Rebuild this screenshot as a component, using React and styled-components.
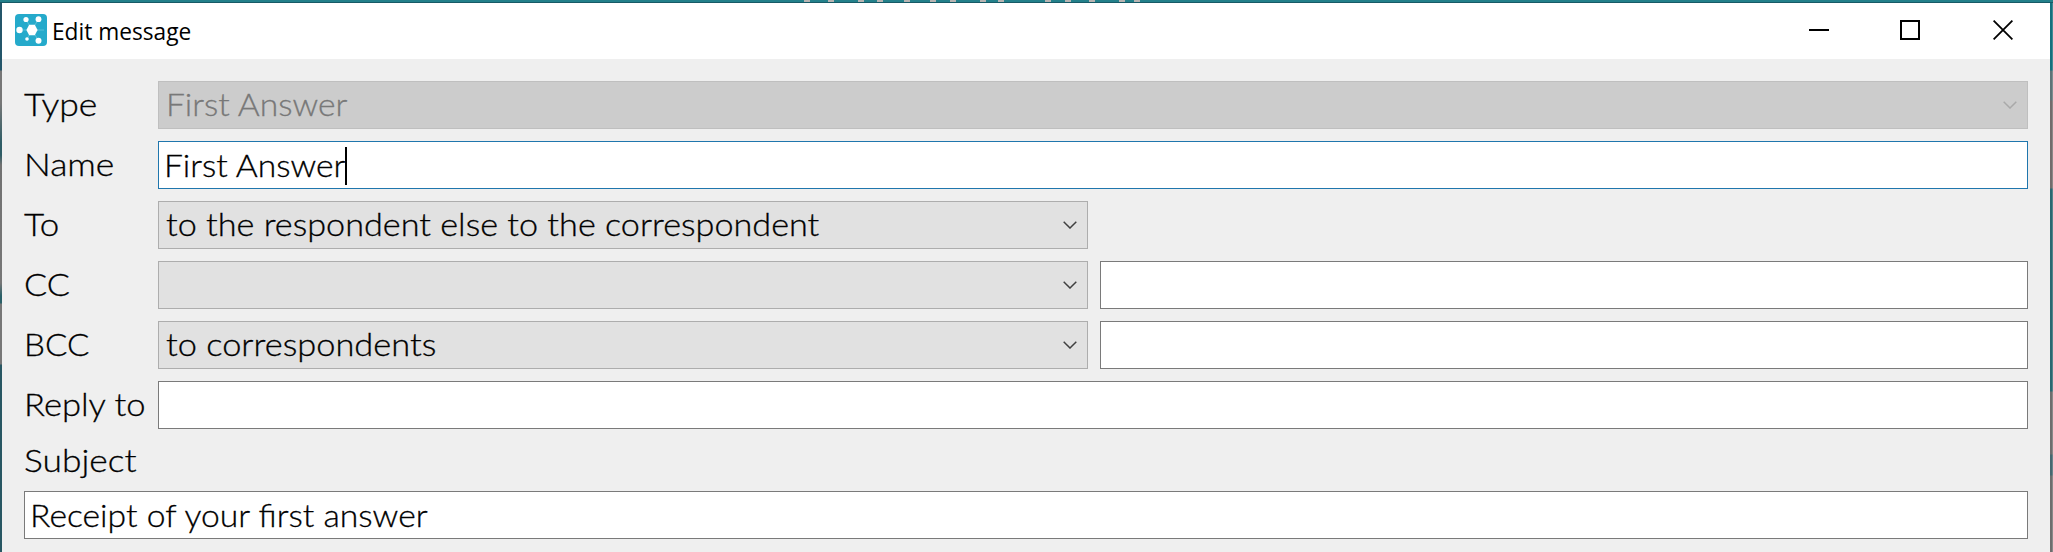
import React from 'react'
import styled, { createGlobalStyle } from 'styled-components'

const GlobalStyle = createGlobalStyle`
  * { box-sizing: border-box; }
  body { margin: 0; }
`

// bits of the window behind that peek out above the title bar
const peeks = [807, 831, 861, 880, 907, 933, 953, 983, 1001, 1048, 1068, 1092, 1122, 1137]

function App() {
  return (
    <Desktop>
      <GlobalStyle />
      <TopEdge>
        <Peeks width="2053" height="2">
          {peeks.map((x) => (
            <rect key={x} x={x - 3} y="0" width="6" height="2" />
          ))}
        </Peeks>
      </TopEdge>
      <LeftEdge />
      <Window>
        <TitleBar>
          <AppIcon />
          <Title>Edit message</Title>
          <WindowButtons />
        </TitleBar>
        <Form>
          <Row $single>
            <Label $stretch={1.11}>Type</Label>
            <Select disabled text="First Answer" stretch={1.05} />
          </Row>
          <Row $single>
            <Label $stretch={1.108}>Name</Label>
            <Input $focused>
              <InputText $stretch={1.05}>First Answer</InputText>
              <Caret />
            </Input>
          </Row>
          <Row>
            <Label $stretch={1.09}>To</Label>
            <Select text="to the respondent else to the correspondent" stretch={1.069} />
          </Row>
          <Row>
            <Label $stretch={1.07}>CC</Label>
            <Select />
            <Input />
          </Row>
          <Row>
            <Label $stretch={1.035}>BCC</Label>
            <Select text="to correspondents" stretch={1.075} />
            <Input />
          </Row>
          <Row $single>
            <Label $stretch={1.08}>Reply to</Label>
            <Input />
          </Row>
          <SubjectLabel $stretch={1.105}>Subject</SubjectLabel>
          <Input>
            <InputText $stretch={1.053}>Receipt of your first answer</InputText>
          </Input>
        </Form>
      </Window>
      <RightEdge />
    </Desktop>
  )
}

function Select({ text, disabled, stretch }) {
  return (
    <SelectBox $disabled={disabled}>
      <Text $stretch={stretch}>{text}</Text>
      <Chevron $disabled={disabled} width="14" height="8" viewBox="0 0 14 8">
        <path d="M.7.800 7 7 13.300.800" />
      </Chevron>
    </SelectBox>
  )
}

function AppIcon() {
  return (
    <svg width="32" height="32" viewBox="0 0 32 32">
      <rect width="32" height="32" rx="4" fill="#25aacb" />
      <path
        d="M17 16 11 5.500M17 16 23.500 5M17 16H4M17 16H29M17 16 23.500 26.500M17 16 12 25"
        stroke="#6fcbe0"
        strokeWidth=".7"
      />
      <g fill="#fff">
        <path d="M14.200 10.800h5.600l2.800 5.200-2.800 5.200h-5.600L11.400 16z" />
        <circle cx="11" cy="5.500" r="2.600" />
        <circle cx="23.500" cy="5.200" r="2.900" />
        <circle cx="4.500" cy="16" r="3.200" />
        <circle cx="23.500" cy="26.700" r="3" />
        <circle cx="12" cy="25" r="1.800" />
      </g>
    </svg>
  )
}

function WindowButtons() {
  return (
    <Buttons>
      <svg width="20" height="20" stroke="#000" strokeWidth="2">
        <path d="M0 10H20" />
      </svg>
      <svg width="20" height="20" stroke="#000" strokeWidth="2" fill="none">
        <rect x="1" y="1" width="18" height="18" />
      </svg>
      <svg width="20" height="20" stroke="#000" strokeWidth="1.800">
        <path d="M.6.600 19.400 19.400M19.400.600.6 19.400" />
      </svg>
    </Buttons>
  )
}

const Desktop = styled.div`
  display: grid;
  grid-template: 3px 549px / 2px 1fr 3px;
  overflow: hidden;
`

const TopEdge = styled.div`
  grid-column: 1 / -1;
  background: #23808a;
  border-bottom: 1px solid #175a66;
`

const Peeks = styled.svg`
  display: block;
  fill: #b8b4b2;
`

const LeftEdge = styled.div`
  background: linear-gradient(
    #24566a 67px,
    #777 68px 100px,
    #2f5d66 140px 152px,
    #727272 162px,
    #777 280px,
    #2a6068 293px 300px,
    #777 301px 361px,
    #285763 362px
  );
`

const RightEdge = styled.div`
  border-right: 1px solid #ffffff30;
  background: linear-gradient(
    #14707d 67px,
    #5f7377 68px 97px,
    #726c6c 98px 185px,
    #2a6871 186px 388px,
    #6e6e6e 389px 451px,
    #476870 452px 472px,
    #6e6e6e 473px
  );
`

const Window = styled.div`
  background: #efefef;
  color: #000;
`

const TitleBar = styled.div`
  display: flex;
  align-items: center;
  height: 56px;
  padding: 0 37px 2px 13px;
  background: #fff;
`

const Title = styled.div`
  margin: 2px 0 0 5px;
  font: 24px/32px 'Open Sans', sans-serif;
  transform: scaleX(0.945);
  transform-origin: left;
`

const Buttons = styled.div`
  display: flex;
  gap: 71px;
  margin-left: auto;

  svg:last-child {
    margin-left: 2px;
  }
`

const Form = styled.div`
  display: flex;
  flex-direction: column;
  gap: 12px;
  padding: 22px 22px 0;
  font: 300 32px/44px Lato, sans-serif;
  -webkit-text-stroke: 0.3px;
`

const Row = styled.div`
  display: grid;
  grid-template-columns: ${(p) => (p.$single ? '122px 1fr' : '122px 930px 928px')};
  gap: 12px;
  height: 48px;
`

const Text = styled.span`
  flex: none;
  align-self: flex-start;
  white-space: pre;
  transform: scaleX(${(p) => p.$stretch || 1});
  transform-origin: left;
`

const Label = styled(Text)`
  justify-self: start;
  line-height: 46px;
`

const SubjectLabel = styled(Text)`
  height: 38px;
  line-height: 37px;
`

const InputText = styled(Text)`
  line-height: 46px;
`

const Input = styled.div`
  display: flex;
  height: 48px;
  padding-left: 5px;
  border: 1px solid ${(p) => (p.$focused ? '#1f76ad' : '#7a7a7a')};
  background: #fff;
`

const SelectBox = styled.div`
  display: flex;
  justify-content: space-between;
  align-items: center;
  padding: 0 10px 0 7px;
  border: 1px solid ${(p) => (p.$disabled ? '#bfbfbf' : '#adadad')};
  background: ${(p) => (p.$disabled ? '#ccc' : '#e1e1e1')};
  color: ${(p) => (p.$disabled ? '#787878' : '#000')};
`

const Chevron = styled.svg`
  fill: none;
  stroke: ${(p) => (p.$disabled ? '#a9a9a9' : '#404040')};
  stroke-width: 1.5;
`

const Caret = styled.div`
  width: 2px;
  height: 38px;
  margin: 5px 0 0 8px;
  background: #000;
`

export default App
